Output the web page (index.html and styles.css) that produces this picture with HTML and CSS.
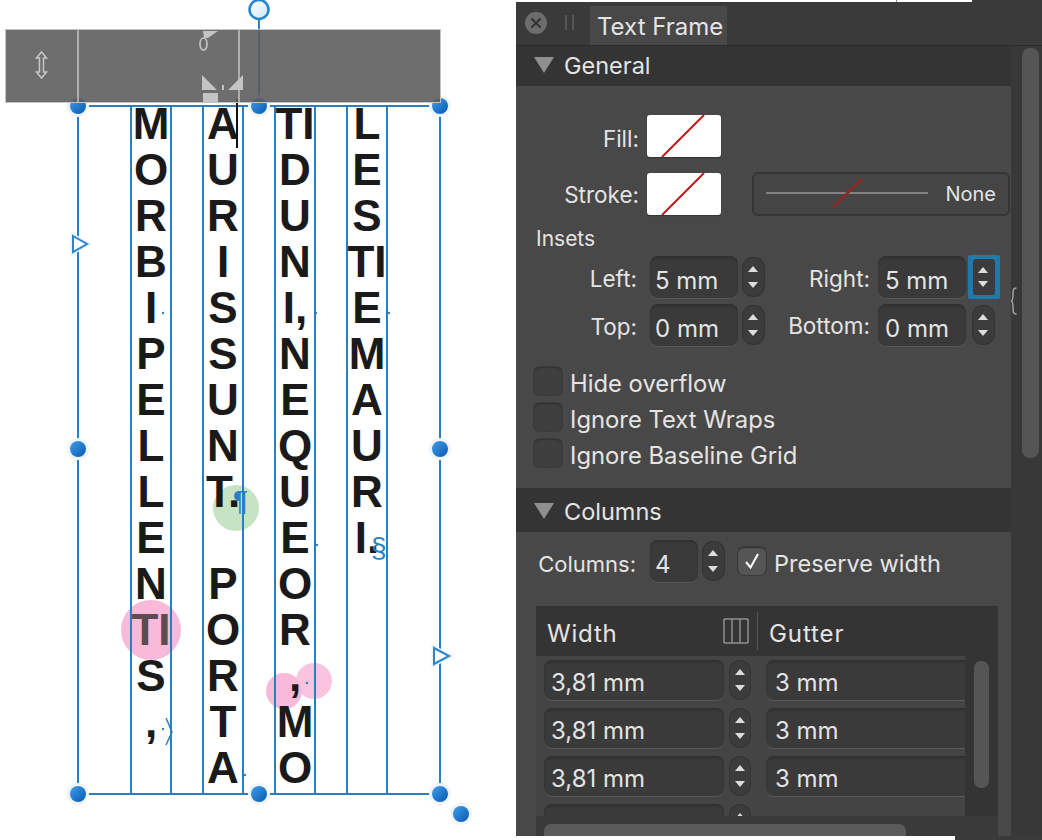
FILE: index.html
```html
<!DOCTYPE html>
<html lang="en">
<head>
    <meta charset="UTF-8">
    <title>Text Frame</title>
    <link rel="stylesheet" href="styles.css">
</head>
<body>
    <div class="canvas">
        <svg class="overlay" width="516" height="840" viewBox="0 0 516 840">
            <circle cx="151" cy="630" r="30" fill="#f9bad9"/>
            <circle cx="284" cy="691" r="18" fill="#f9bad9"/>
            <circle cx="314" cy="681" r="18" fill="#f9bad9" fill-opacity="0.85"/>
            <circle cx="236" cy="508" r="23" fill="#c6e4c4"/>
        </svg>

        <div class="frame">
            <div class="column"><div class="letters">M<br>O<br>R<br>B<br>I<br>P<br>E<br>L<br>L<br>E<br>N<br><span class="tinted">TI</span><br>S<br>,</div></div>
            <div class="column"><div class="letters">A<br>U<br>R<br>I<br>S<br>S<br>U<br>N<br>T.<br>&nbsp;<br>P<br>O<br>R<br>T<br>A</div></div>
            <div class="column"><div class="letters">TI<br>D<br>U<br>N<br>I,<br>N<br>E<br>Q<br>U<br>E<br>O<br>R<br>,<br>M<br>O</div></div>
            <div class="column"><div class="letters">L<br>E<br>S<br>TI<br>E<br>M<br>A<br>U<br>R<br>I.</div></div>
        </div>

        <svg class="overlay" width="516" height="840" viewBox="0 0 516 840">
            <defs>
                <linearGradient id="knob" x1="0" y1="0" x2="1" y2="1">
                    <stop offset="0" stop-color="#3f9fea"/>
                    <stop offset="1" stop-color="#0a58b0"/>
                </linearGradient>
                <linearGradient id="ring" x1="0" y1="0" x2="1" y2="1">
                    <stop offset="0" stop-color="#ffffff"/>
                    <stop offset="1" stop-color="#cfe6f8"/>
                </linearGradient>
                <g id="handle">
                    <circle r="11" fill="#eef4f9"/>
                    <circle r="8" fill="url(#knob)"/>
                </g>
            </defs>

            <line x1="259" y1="19" x2="259" y2="106" stroke="#2a7fc0" stroke-width="2"/>
            <circle cx="259" cy="9.5" r="9.5" fill="url(#ring)" stroke="#2386cc" stroke-width="2.5"/>
            <line x1="237" y1="99" x2="237" y2="148" stroke="#111" stroke-width="2"/>

            <g fill="#2a7fc0">
                <circle cx="163" cy="313" r="1.2"/>
                <circle cx="316" cy="313" r="1.2"/>
                <circle cx="389" cy="313" r="1.2"/>
                <circle cx="317" cy="545" r="1.2"/>
                <circle cx="245" cy="775" r="1.2"/>
                <circle cx="307" cy="683" r="1.2"/>
                <circle cx="163" cy="729" r="1.2"/>
            </g>
            <path d="M166 718 L172 732 L166 745" fill="none" stroke="#2a7fc0" stroke-width="1.5"/>
            <text class="mark" x="233" y="510">¶</text>
            <text class="mark" x="371" y="557">§</text>

            <path d="M73 236 L87 244 L73 252 Z" fill="#fff" stroke="#eaf2f8" stroke-width="5"/>
            <path d="M73 236 L87 244 L73 252 Z" fill="#fff" stroke="#2a86cc" stroke-width="2"/>
            <path d="M434 648 L449 656 L434 664 Z" fill="#fff" stroke="#eaf2f8" stroke-width="5"/>
            <path d="M434 648 L449 656 L434 664 Z" fill="#fff" stroke="#2a86cc" stroke-width="2"/>

            <use href="#handle" x="78" y="106"/>
            <use href="#handle" x="259" y="106"/>
            <use href="#handle" x="440" y="106"/>
            <use href="#handle" x="78" y="449"/>
            <use href="#handle" x="440" y="449"/>
            <use href="#handle" x="78" y="794"/>
            <use href="#handle" x="259" y="794"/>
            <use href="#handle" x="440" y="794"/>
            <use href="#handle" x="461" y="814"/>
        </svg>

        <div class="guide-bar">
            <svg width="434" height="72" viewBox="6 30 434 72">
                <line x1="78" y1="30" x2="78" y2="102" stroke="#c4c4c4" stroke-width="1.5"/>
                <line x1="239" y1="30" x2="239" y2="102" stroke="#c4c4c4" stroke-width="1.5"/>
                <path d="M41.5 52 L46.5 58 H43.5 V72 H46.5 L41.5 78 L36.5 72 H39.5 V58 H36.5 Z" fill="none" stroke="#c8c8c8" stroke-width="1.5"/>
                <path d="M203 31 H218 L208 38 H204 Z" fill="#c4c4c4"/>
                <ellipse cx="203.5" cy="44" rx="3.5" ry="6" fill="none" stroke="#c4c4c4" stroke-width="1.7"/>
                <path d="M202 75 L217 90 H202 Z M243 75 L228 90 H243 Z M222 85 H224 V90 H222 Z M203 93 H218 V102 H203 Z" fill="#c4c4c4"/>
            </svg>
        </div>
    </div>

    <div class="panel">
        <div class="edge-top"></div>
        <div class="tabbar">
            <div class="close">
                <svg width="12" height="12" viewBox="0 0 12 12"><path d="M1.5 1.5 L10.5 10.5 M10.5 1.5 L1.5 10.5" stroke="#333" stroke-width="2"/></svg>
            </div>
            <div class="grip"></div>
            <div class="tab">Text Frame</div>
        </div>

        <div class="panel-main">
            <div class="sections">
                <div class="section-head general-head"><span class="arrow"></span>General</div>
                <div class="section-body general">
                    <div class="row fill-row">
                        <span class="label swatch-label">Fill:</span>
                        <div class="swatch"><svg width="74" height="42" viewBox="0 0 74 42"><line x1="15" y1="42" x2="57" y2="0" stroke="#c01818" stroke-width="2"/></svg></div>
                    </div>
                    <div class="row stroke-row">
                        <span class="label swatch-label">Stroke:</span>
                        <div class="swatch"><svg width="74" height="42" viewBox="0 0 74 42"><line x1="15" y1="42" x2="57" y2="0" stroke="#c01818" stroke-width="2"/></svg></div>
                        <div class="stroke-box">
                            <svg width="176" height="44" viewBox="0 0 176 44">
                                <line x1="12" y1="21" x2="174" y2="21" stroke="#bdbdbd" stroke-width="1"/>
                                <line x1="79" y1="35" x2="108" y2="7" stroke="#8c2a2a" stroke-width="3"/>
                            </svg>
                            <span class="stroke-none">None</span>
                        </div>
                    </div>

                    <div class="insets-title">Insets</div>
                    <div class="row inset-row">
                        <span class="label inset-left">Left:</span>
                        <div class="input inset-input">5 mm</div>
                        <div class="spin"></div>
                        <span class="label inset-right">Right:</span>
                        <div class="input inset-input">5 mm</div>
                        <div class="spin-focus"><div class="spin"></div></div>
                    </div>
                    <div class="row inset-row">
                        <span class="label inset-left">Top:</span>
                        <div class="input inset-input">0 mm</div>
                        <div class="spin"></div>
                        <span class="label inset-right bottom-label">Bottom:</span>
                        <div class="input inset-input">0 mm</div>
                        <div class="spin spin-plain"></div>
                    </div>

                    <div class="checks">
                        <div class="check-row"><span class="checkbox"></span><span class="check-text">Hide overflow</span></div>
                        <div class="check-row"><span class="checkbox"></span><span class="check-text">Ignore Text Wraps</span></div>
                        <div class="check-row"><span class="checkbox"></span><span class="check-text">Ignore Baseline Grid</span></div>
                    </div>
                    <svg class="link-brace" width="6" height="28" viewBox="0 0 6 28">
                        <path d="M5.5 1 C2 1 2 3 2 8 C2 12 2 13 0.5 14 C2 15 2 16 2 20 C2 25 2 27 5.5 27" fill="none" stroke="#a8a8a8" stroke-width="1.4"/>
                    </svg>
                </div>

                <div class="section-head columns-head"><span class="arrow"></span>Columns</div>
                <div class="section-body columns">
                    <div class="row columns-row">
                        <span class="label columns-label">Columns:</span>
                        <div class="input count-input">4</div>
                        <div class="spin"></div>
                        <span class="checkbox checked">
                            <svg width="20" height="20" viewBox="0 0 20 20"><path d="M4 11 L8.5 16.5 L16 3" fill="none" stroke="#fff" stroke-width="2"/></svg>
                        </span>
                        <span class="preserve">Preserve width</span>
                    </div>

                    <div class="table">
                        <div class="table-head">
                            <span class="th-width">Width</span>
                            <svg class="cols-icon" width="26" height="26" viewBox="0 0 26 26">
                                <path d="M1 1 H25 M1 25 H25 M1 1 V25 M9 1 V25 M17 1 V25 M25 1 V25" fill="none" stroke="#8f8f8f" stroke-width="1.5"/>
                            </svg>
                            <span class="th-sep"></span>
                            <span class="th-gutter">Gutter</span>
                        </div>
                        <div class="table-main">
                            <div class="table-rows">
                                <div class="table-row">
                                    <div class="input width-input">3,81 mm</div>
                                    <div class="spin"></div>
                                    <div class="input gutter-input">3 mm</div>
                                </div>
                                <div class="table-row">
                                    <div class="input width-input">3,81 mm</div>
                                    <div class="spin"></div>
                                    <div class="input gutter-input">3 mm</div>
                                </div>
                                <div class="table-row">
                                    <div class="input width-input">3,81 mm</div>
                                    <div class="spin"></div>
                                    <div class="input gutter-input">3 mm</div>
                                </div>
                                <div class="table-row">
                                    <div class="input width-input"></div>
                                    <div class="spin"></div>
                                </div>
                            </div>
                            <div class="table-scroll"><div class="table-thumb"></div></div>
                        </div>
                        <div class="table-foot"><div class="foot-thumb"></div></div>
                    </div>
                </div>
            </div>
            <div class="side-scroll"><div class="side-thumb"></div></div>
        </div>
        <div class="edge-bottom"></div>
    </div>
</body>
</html>
```

FILE: styles.css
```css
* {
    box-sizing: border-box;
    margin: 0;
    padding: 0;
}

body {
    display: flex;
    width: 1042px;
    height: 840px;
    overflow: hidden;
    background: #fff;
    font-family: Inter, "Liberation Sans", sans-serif;
}

/* canvas */
.canvas {
    position: relative;
    width: 516px;
    height: 840px;
    flex: none;
}

.frame {
    position: absolute;
    left: 77px;
    top: 105px;
    width: 364px;
    height: 690px;
    display: flex;
    justify-content: center;
    gap: 30px;
    border: 2px solid #2a7fc0;
}

.column {
    width: 42px;
    border-left: 2px solid #2a7fc0;
    border-right: 2px solid #2a7fc0;
    margin: -2px 0;
}

.letters {
    margin: -4px -4px 0;
    font-family: "Liberation Sans", Arial, sans-serif;
    font-weight: bold;
    font-size: 44px;
    line-height: 46px;
    text-align: center;
    color: #1a1a1a;
}

.tinted {
    color: #5a4c52;
}

.overlay {
    position: absolute;
    left: 0;
    top: 0;
}

.mark {
    font-family: "Liberation Sans", Arial, sans-serif;
    font-size: 28px;
    fill: #2a7fc0;
}

.guide-bar {
    position: absolute;
    left: 5px;
    top: 29px;
    width: 436px;
    height: 74px;
    background: rgba(90, 90, 90, 0.88);
    border: 1px solid #c4c4c4;
}

.guide-bar svg {
    display: block;
}

/* panel */
.panel {
    width: 526px;
    height: 840px;
    flex: none;
    display: flex;
    flex-direction: column;
    background: #3a3a3a;
    color: #e4e4e4;
    font-size: 23.5px;
}

.edge-top {
    width: 456px;
    height: 2px;
    flex: none;
    background: linear-gradient(to right, #fff 380px, #888 380px, #888 381px, #fff 381px);
}

.tabbar {
    height: 44px;
    flex: none;
    display: flex;
    align-items: flex-end;
    background: #3a3a3a;
    border-bottom: 1px solid #2b2b2b;
}

.close {
    width: 22px;
    height: 22px;
    margin: 0 0 11px 9px;
    display: flex;
    align-items: center;
    justify-content: center;
    border-radius: 50%;
    background: #6c6c6c;
}

.grip {
    width: 9px;
    height: 15px;
    margin: 0 0 15px 18px;
    border-left: 2px solid #555;
    border-right: 2px solid #555;
}

.tab {
    width: 137px;
    height: 39px;
    margin-left: 16px;
    padding: 6px 0 0 7px;
    background: #484848;
    font-size: 24px;
    white-space: nowrap;
}

.panel-main {
    flex: 1;
    min-height: 0;
    display: flex;
}

.sections {
    position: relative;
    width: 495px;
    flex: none;
}

.side-scroll {
    flex: 1;
    background: #383838;
    padding: 2px 3px 0 11px;
}

.side-thumb {
    width: 17px;
    height: 410px;
    border-radius: 8px;
    background: #555;
}

.section-head {
    height: 40px;
    display: flex;
    align-items: center;
    padding-left: 18px;
    background: #343434;
}

.general-head {
    padding-bottom: 2px;
}

.columns-head {
    height: 44px;
    padding-top: 2px;
}

.arrow {
    width: 0;
    height: 0;
    margin-right: 10px;
    border-left: 10px solid transparent;
    border-right: 10px solid transparent;
    border-top: 16px solid #8f8f8f;
}

.section-body {
    background: #484848;
}

.general {
    height: 402px;
    padding-top: 29px;
}

.columns {
    height: 304px;
    padding-top: 8px;
}

.row {
    display: flex;
    align-items: center;
}

.fill-row {
    height: 42px;
}

.fill-row .label {
    padding-top: 4px;
}

.stroke-row {
    height: 44px;
    margin-top: 15px;
}

.label {
    flex: none;
    text-align: right;
    font-size: 22.5px;
}

.swatch-label {
    width: 123px;
}

.swatch {
    width: 74px;
    height: 42px;
    margin-left: 8px;
    flex: none;
    background: #fff;
    border-radius: 3px;
    box-shadow: 0 1px 1px #333;
    overflow: hidden;
}

.swatch svg {
    display: block;
}

.stroke-box {
    width: 258px;
    height: 44px;
    margin-left: 31px;
    display: flex;
    align-items: center;
    justify-content: space-between;
    padding-right: 12px;
    background: #454545;
    border: 2px solid #363636;
    border-radius: 6px;
    font-size: 20px;
}

.stroke-box svg {
    flex: none;
}

.insets-title {
    margin: 9px 0 3px 20px;
    height: 28px;
    line-height: 28px;
    font-size: 21px;
}

.inset-row {
    height: 42px;
    margin-bottom: 6px;
}

.inset-left {
    width: 121px;
    padding-top: 3px;
}

.inset-right {
    width: 101px;
    margin-left: 5px;
    padding-top: 2px;
}

.bottom-label {
    padding-top: 0;
}

.input {
    height: 42px;
    flex: none;
    padding-left: 5px;
    line-height: 50px;
    font-size: 24px;
    background: #3a3a3a;
    border-radius: 8px;
    box-shadow: inset 0 2px 2px #303030, 0 1px 0 #585858;
    white-space: nowrap;
}

.inset-input {
    width: 88px;
}

.inset-left + .input {
    margin-left: 13px;
}

.inset-right + .input {
    margin-left: 8px;
    padding-left: 7px;
}

.spin {
    position: relative;
    width: 21px;
    height: 38px;
    margin-left: 5px;
    flex: none;
    background: #3c3c3c;
    border-radius: 10px;
    box-shadow: 0 0 0 1px #333;
}

.spin::before,
.spin::after {
    content: "";
    position: absolute;
    left: 5px;
    border-left: 5.5px solid transparent;
    border-right: 5.5px solid transparent;
}

.spin::before {
    top: 8px;
    border-bottom: 6px solid #ddd;
}

.spin::after {
    bottom: 8px;
    border-top: 6px solid #ddd;
}

.spin-plain {
    margin-left: 7px;
}

.spin-focus {
    width: 32px;
    height: 44px;
    margin-left: 2px;
    padding: 4px 5px;
    flex: none;
    background: #1f79aa;
    border-radius: 2px;
}

.spin-focus .spin {
    width: 22px;
    height: 36px;
    margin-left: 0;
    border-radius: 3px;
    box-shadow: none;
}

.checks {
    margin: 21px 0 0 18px;
    display: flex;
    flex-direction: column;
    gap: 8px;
}

.check-row {
    height: 28px;
    display: flex;
    align-items: center;
    gap: 8px;
    font-size: 23.8px;
}

.check-text {
    padding-top: 4px;
}

.checkbox {
    width: 28px;
    height: 28px;
    flex: none;
    display: flex;
    align-items: center;
    justify-content: center;
    background: #3e3e3e;
    border-radius: 6px;
    box-shadow: inset 0 1px 1px #333, 0 0 0 1px #3a3a3a;
}

.link-brace {
    position: absolute;
    left: 495px;
    top: 241px;
}

.columns-label {
    width: 120px;
    padding-top: 6px;
    font-size: 22px;
}

.columns-row {
    height: 42px;
}

.count-input {
    width: 48px;
    margin-left: 14px;
}

.columns-row .checkbox {
    margin-left: 14px;
    background: #555;
}

.preserve {
    margin-left: 8px;
    padding-top: 4px;
}

.table {
    width: 462px;
    height: 230px;
    margin: 24px 0 0 20px;
    background: #343434;
    overflow: hidden;
}

.table-head {
    height: 50px;
    display: flex;
    align-items: center;
    padding-left: 11px;
    font-size: 24px;
}

.th-width {
    width: 176px;
    padding-top: 4px;
    letter-spacing: 0.8px;
}

.cols-icon {
    flex: none;
}

.th-sep {
    width: 1px;
    height: 38px;
    margin-left: 8px;
    background: #555;
}

.th-gutter {
    margin-left: 11px;
    padding-top: 4px;
    letter-spacing: 0.9px;
}

.table-main {
    height: 160px;
    display: flex;
}

.table-rows {
    width: 429px;
    padding-top: 4px;
    background: #444;
    overflow: hidden;
}

.table-row {
    height: 48px;
    display: flex;
    align-items: flex-start;
    padding-left: 8px;
}

.width-input {
    width: 180px;
    height: 40px;
    padding-left: 7px;
    line-height: 46px;
}

.table-row .spin {
    width: 20px;
    margin-left: 6px;
    margin-top: 1px;
}

.gutter-input {
    width: 220px;
    height: 40px;
    margin-left: 16px;
    padding-left: 9px;
    line-height: 46px;
}

.table-scroll {
    flex: 1;
    padding: 5px 0 0 9px;
}

.table-thumb {
    width: 15px;
    height: 127px;
    border-radius: 7px;
    background: #555;
}

.table-foot {
    height: 20px;
    padding: 8px 0 0 8px;
    background: #3a3a3a;
}

.foot-thumb {
    width: 362px;
    height: 20px;
    border-radius: 7px;
    background: #5a5a5a;
}

.edge-bottom {
    width: 439px;
    height: 4px;
    flex: none;
    background: #fff;
}
```
